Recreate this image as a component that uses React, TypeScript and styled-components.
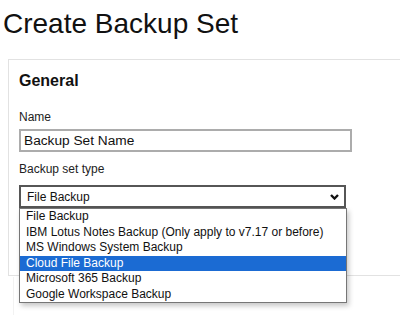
import React from 'react';
import styled, { createGlobalStyle } from 'styled-components';

const GlobalStyle = createGlobalStyle`
  html, body {
    margin: 0;
    padding: 0;
    background: #fff;
    overflow: hidden;
  }
  body {
    font-family: "Liberation Sans", Arial, sans-serif;
    color: #111;
  }
`;

const Page = styled.div`
  width: 400px;
  height: 315px;
  padding-top: 8px;
  box-sizing: border-box;
  overflow: hidden;
`;

const Heading = styled.h1`
  margin: 0 0 0 3px;
  font-size: 28px;
  font-weight: 400;
  line-height: 32px;
  color: #111;
`;

const Card = styled.section`
  margin: 19px -20px 0 8px;
  height: 217px;
  border: 1px solid #e2e2e2;
  padding: 12px 10px 0 10px;
  box-sizing: border-box;
`;

const NextCard = styled.div`
  margin: 1px 0 0 13px;
  height: 40px;
  border-left: 1px solid #f2f2f2;
`;

const CardTitle = styled.h3`
  margin: 0 0 20px 0;
  font-size: 16px;
  font-weight: 700;
  line-height: 18px;
  color: #111;
`;

const Label = styled.div<{ gap?: number }>`
  font-size: 12px;
  line-height: 14px;
  color: #222;
  margin-bottom: ${p => p.gap ?? 5}px;
`;

const TextInput = styled.div`
  width: 333px;
  height: 23px;
  box-sizing: border-box;
  border: 2px solid #acacac;
  padding: 0 0 0 3px;
  display: flex;
  align-items: center;
  font-size: 13.7px;
  color: #111;
  margin-bottom: 10px;
`;

const SelectWrap = styled.div`
  position: relative;
  width: 327px;
`;

const SelectBox = styled.div`
  height: 23px;
  box-sizing: border-box;
  border: 2px solid #565656;
  padding: 0 5px 0 6px;
  display: flex;
  align-items: center;
  justify-content: space-between;
  font-size: 12px;
  color: #111;
`;

const OptionList = styled.ul`
  position: absolute;
  top: 100%;
  left: 0;
  width: 328px;
  margin: 0;
  padding: 0;
  list-style: none;
  background: #fff;
  border: 1px solid #767676;
  box-sizing: border-box;
  box-shadow: 2px 3px 5px rgba(0, 0, 0, 0.22);
`;

const Option = styled.li<{ active?: boolean }>`
  height: 15.5px;
  line-height: 15.5px;
  padding-left: 6px;
  font-size: 12px;
  white-space: nowrap;
  background: ${p => (p.active ? '#1b6bd3' : '#fff')};
  color: ${p => (p.active ? '#fff' : '#111')};
`;

const Chevron = () => (
  <svg width="9" height="6" viewBox="0 0 9 6">
    <polyline points="1,1 4.5,4.5 8,1" fill="none" stroke="#111" strokeWidth="2.4" />
  </svg>
);

const options = [
  'File Backup',
  'IBM Lotus Notes Backup (Only apply to v7.17 or before)',
  'MS Windows System Backup',
  'Cloud File Backup',
  'Microsoft 365 Backup',
  'Google Workspace Backup',
];

const App: React.FC = () => {
  return (
    <>
      <GlobalStyle />
      <Page>
        <Heading>Create Backup Set</Heading>
        <Card>
          <CardTitle>General</CardTitle>
          <Label>Name</Label>
          <TextInput>Backup Set Name</TextInput>
          <Label gap={9}>Backup set type</Label>
          <SelectWrap>
            <SelectBox>
              <span>File Backup</span>
              <Chevron />
            </SelectBox>
            <OptionList>
              {options.map(o => (
                <Option key={o} active={o === 'Cloud File Backup'}>
                  {o}
                </Option>
              ))}
            </OptionList>
          </SelectWrap>
        </Card>
        <NextCard />
      </Page>
    </>
  );
};

export default App;
